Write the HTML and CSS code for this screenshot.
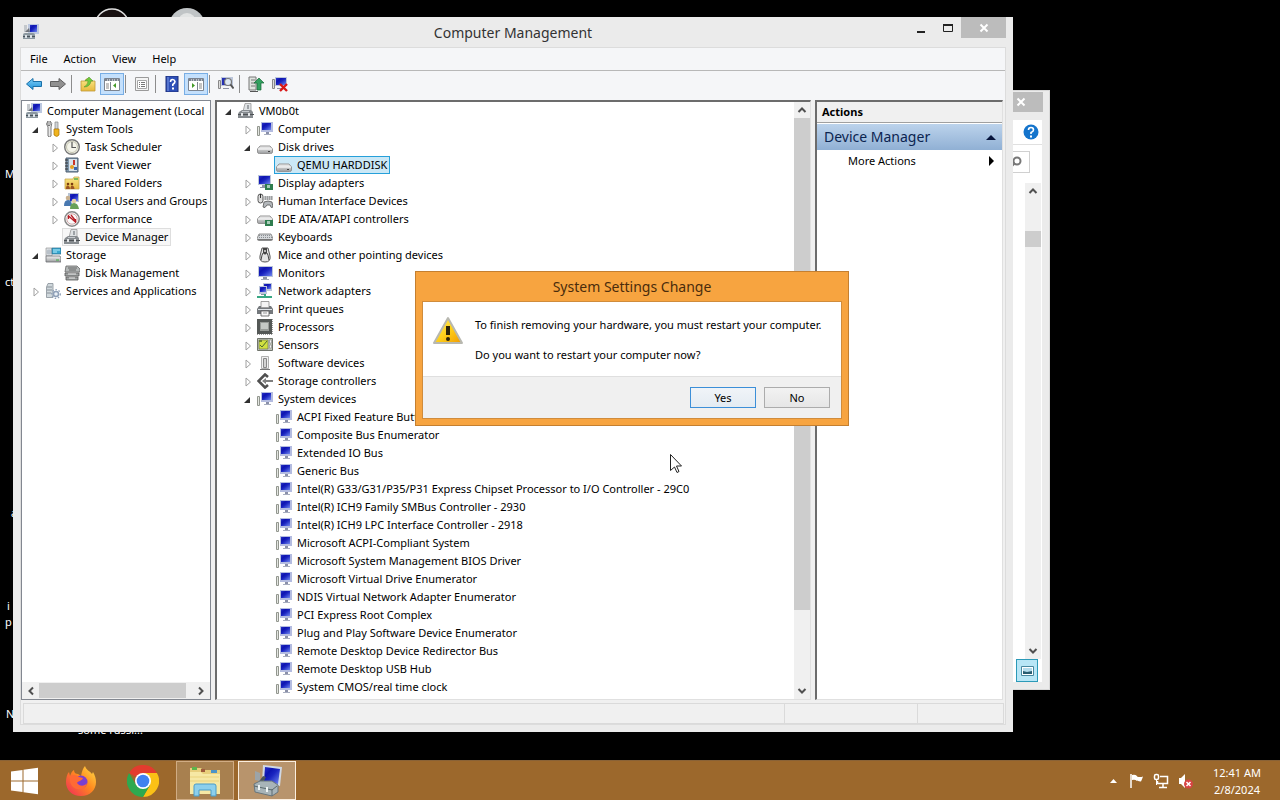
FILE: index.html
```
<!DOCTYPE html>
<html lang="en">
<head>
    <meta charset="UTF-8">
    <meta name="viewport" content="width=device-width, initial-scale=1.0">
    <title>Computer Management</title>
    <link rel="stylesheet" href="styles.css">
</head>
<body>
    <svg class="sprite" aria-hidden="true">
        <defs>
            <linearGradient id="screen" x1="0" y1="0" x2="1" y2="1">
                <stop offset="0" stop-color="#2a34c8"/><stop offset=".3" stop-color="#0e14b0"/><stop offset=".5" stop-color="#1a24c0"/><stop offset="1" stop-color="#7088f0"/>
            </linearGradient>
            <linearGradient id="metal" x1="0" y1="0" x2="0" y2="1">
                <stop offset="0" stop-color="#f4f4f4"/><stop offset="1" stop-color="#9a9c9e"/>
            </linearGradient>
            <linearGradient id="yellow" x1="0" y1="0" x2="0" y2="1">
                <stop offset="0" stop-color="#fbe98c"/><stop offset="1" stop-color="#e8b93c"/>
            </linearGradient>
            <linearGradient id="blue" x1="0" y1="0" x2="0" y2="1">
                <stop offset="0" stop-color="#7fd0f8"/><stop offset="1" stop-color="#1e90d8"/>
            </linearGradient>
            <linearGradient id="warn" x1="0" y1="0" x2="1" y2="1">
                <stop offset="0" stop-color="#fff27a"/><stop offset=".5" stop-color="#ffd21c"/><stop offset="1" stop-color="#f09a00"/>
            </linearGradient>
            <linearGradient id="fox" x1="1" y1="0" x2="0" y2="1">
                <stop offset="0" stop-color="#ffe14a"/><stop offset=".45" stop-color="#ff8a1e"/><stop offset="1" stop-color="#f0265c"/>
            </linearGradient>
        </defs>

        <symbol id="closed" viewBox="0 0 16 18"><path d="M5 6v8L9.500 10z" fill="#fff" stroke="#a0a0a0"/></symbol>
        <symbol id="open" viewBox="0 0 16 18"><path d="M9 7v6H3z" fill="#303030"/></symbol>

        <symbol id="mmc" viewBox="0 0 16 16">
            <path d="M5 0h11v10H5z" fill="#bcc8e0"/><path d="M7 1h7v7H7z" fill="url(#screen)"/><path d="M1 1h3v7H1z" fill="#c4c8cc"/>
            <path d="M2 8l4-4 1 4z" fill="#70747c"/>
            <path d="M0 11q0-2 2-2h8q2 0 2 2v4H0z" fill="#8c98a0"/><path d="M0 12h12v1H0z" fill="#48525a"/><path d="M2 11h2v3H2zM7 11h2v3H7z" fill="#dde3e8"/>
        </symbol>
        <symbol id="tools" viewBox="0 0 16 16">
            <path d="M3 0v4l1 1 1-1V0q3 2 1 6v9q-2 2-3 0V6Q0 3 3 0z" fill="#e8e8e8" stroke="#777"/>
            <path d="M10 1h3v7h-3z" fill="#d0d4d8" stroke="#888" stroke-width=".7"/><path d="M9 8h5v6q-2 3-5 0z" fill="#f0b41e" stroke="#a87408" stroke-width=".7"/>
        </symbol>
        <symbol id="clock" viewBox="0 0 16 16">
            <circle cx="8" cy="8" r="7.300" fill="#f4f4ea" stroke="#777" stroke-width="1.400"/><circle cx="8" cy="8" r="5.500" fill="none" stroke="#c4c4b0"/>
            <path d="M8 3v5.500h4" fill="none" stroke="#555" stroke-width="1.200"/>
        </symbol>
        <symbol id="event" viewBox="0 0 16 16">
            <path d="M2 1h12v14H2z" fill="#7f97ac" stroke="#4e5f70"/><path d="M5 2h8v12H5z" fill="#d8e2ea"/><path d="M1 3h3M1 6h3M1 9h3M1 12h3" stroke="#333"/>
            <path d="M9 3h2v5H9z" fill="#c83428"/><circle cx="8" cy="10" r="2" fill="#e8a020"/><path d="M10 10h3v3h-3z" fill="#3a68b0"/>
        </symbol>
        <symbol id="folder" viewBox="0 0 16 16">
            <path d="M1 4h8l1-2h5v12H1z" fill="url(#yellow)" stroke="#c8a850" stroke-width=".8"/><path d="M10 3h4v2h-4z" fill="#7cba58"/>
            <circle cx="4" cy="9" r="1.300" fill="#7a3c10"/><circle cx="8" cy="9" r="1.300" fill="#7a3c10"/><path d="M2 14q0-4 2-3.500T6 14zM6.500 14q0-4 2-3.500T10.500 14z" fill="#9a5424"/>
        </symbol>
        <symbol id="users" viewBox="0 0 16 16">
            <path d="M4 0h11v9H4z" fill="#b8c4d4"/><path d="M6 1h8v7H6z" fill="url(#screen)"/>
            <circle cx="4" cy="5" r="2.300" fill="#c8b090"/><path d="M0 13q0-6 4-6t4 6z" fill="#4878b0"/><circle cx="10" cy="8" r="2.300" fill="#e4cca4"/><path d="M6 16q0-6 4-6t5 6z" fill="#68a058"/>
        </symbol>
        <symbol id="perf" viewBox="0 0 16 16">
            <circle cx="8" cy="8" r="7.200" fill="#fafafa" stroke="#888" stroke-width="1.500"/><circle cx="8" cy="8" r="5.200" fill="none" stroke="#d0a8a8"/>
            <path d="M4.500 8V5l7 6V8M7 4l4 5" stroke="#b81c24" stroke-width="1.300" fill="none"/>
        </symbol>
        <symbol id="devmgr" viewBox="0 0 16 16">
            <path d="M7 .5h6v8H5z" fill="#dfe2e4" stroke="#999" stroke-width=".8"/><path d="M9 2h2v4H9z" fill="#9da2a6"/>
            <path d="M1 9l3-2h9l2 2v6H0v-4z" fill="#868b8f"/><path d="M0 11h16v1H0z" fill="#4e5256"/><path d="M3 10h2v3H3zM10 10h2v3h-2z" fill="#e4e6e8"/><path d="M4 8h7v1H4z" fill="#c4c8cc"/>
        </symbol>
        <symbol id="storage" viewBox="0 0 16 16">
            <path d="M1 1h6v8H1z" fill="#dce0e4" stroke="#999" stroke-width=".7"/><circle cx="4" cy="5" r="2.500" fill="#b8c0c8"/>
            <path d="M7 1h9v6H7z" fill="#38a8d0" stroke="#286888" stroke-width=".7"/><path d="M8 3h7M8 5h4" stroke="#b8ecfa"/>
            <path d="M1 9h14l1 2v4H1z" fill="url(#metal)" stroke="#6c7074" stroke-width=".8"/><path d="M11 13h3" stroke="#3cae3c"/>
        </symbol>
        <symbol id="diskmgmt" viewBox="0 0 16 16">
            <path d="M2 1h11l3 3v3H1z" fill="#b4b8b8" stroke="#666" stroke-width=".8"/><path d="M4 3h9M5 5h7" stroke="#666"/>
            <path d="M1 8h14v3H1zM2 12h12v3H2z" fill="#a0a4a4" stroke="#555" stroke-width=".8"/><path d="M4 9h8M5 13h6" stroke="#e8e8e8"/>
        </symbol>
        <symbol id="services" viewBox="0 0 16 16">
            <path d="M3 .5h5v14H1.500V4z" fill="#d0d8dc" stroke="#889098" stroke-width=".8"/><path d="M2 4h5M2 7h5M2 10h4" stroke="#889098"/>
            <circle cx="11" cy="11" r="2.500" fill="#eaf0f6" stroke="#8fa0b8" stroke-width="1.500"/><circle cx="11" cy="11" r="4.300" fill="none" stroke="#8fa0b8" stroke-width="1.300" stroke-dasharray="1.500 1.700"/>
        </symbol>
        <symbol id="computer" viewBox="0 0 16 16">
            <path d="M.5 5.500h2v9h-2z" fill="#e4e6e2" stroke="#92968e"/><path d="M4 1h12v10H4z" fill="#b4bce0"/><path d="M5 2h9v7H5z" fill="url(#screen)"/>
            <path d="M9 11h3v2H9z" fill="#8a90a8"/><path d="M7 13h7v1H7z" fill="#a8aec0"/>
        </symbol>
        <symbol id="disk" viewBox="0 0 16 16">
            <path d="M3 7h10l2.500 3v3q0 1.500-2 1.500h-11q-2 0-2-1.500v-3z" fill="url(#metal)" stroke="#959595"/><path d="M1 10h14" stroke="#fff"/><path d="M11 12.500h2" stroke="#444"/>
        </symbol>
        <symbol id="display" viewBox="0 0 16 16">
            <path d="M1 0h13v10H1z" fill="#bcc6da"/><path d="M2 1h11v8H2z" fill="url(#screen)"/><path d="M5 10h3v2H5zM3 12h6v1H3z" fill="#8d93a5"/>
            <path d="M8 9h8v6H8z" fill="#2f7d4f"/><path d="M10 10h3v3h-3z" fill="#a8ccb8"/>
        </symbol>
        <symbol id="hid" viewBox="0 0 16 16">
            <rect x="1" y="1" width="5" height="9" rx="2.500" fill="#ddd" stroke="#555"/><path d="M3.500 1v4" stroke="#333"/>
            <path d="M7 3h9v4H7z" fill="#c4c6c8"/><path d="M8 4h7M8 6h7" stroke="#777" stroke-dasharray="1 1"/>
            <path d="M7 9q4-2 8 0l1 5q-2 2-3-2h-3q-2 4-4 2z" fill="#b4b8bc" stroke="#555" stroke-width=".8"/>
        </symbol>
        <symbol id="ide" viewBox="0 0 16 16">
            <path d="M3 5h10l2.500 3v3q0 1.500-1 1.500H2q-1.500 0-1.500-1.500V8z" fill="url(#metal)" stroke="#959595"/><path d="M1 8h14" stroke="#fff"/><path d="M8 9h8v6H8z" fill="#2f7d4f"/><path d="M10 10h3v3h-3z" fill="#a8ccb8"/>
        </symbol>
        <symbol id="keyboard" viewBox="0 0 16 16">
            <path d="M2 5h12l2 4.500q0 2-2 2H2q-2 0-2-2z" fill="#d4d7da" stroke="#666" stroke-width=".7"/><path d="M2 6.500h12M2 8.500h13" stroke="#8a8e92" stroke-dasharray="1 1"/><path d="M1 10.500h14" stroke="#777"/>
        </symbol>
        <symbol id="mouse" viewBox="0 0 16 16">
            <path d="M5 1h6l2 8q1 6-5 6t-5-6z" fill="#e4e4e4" stroke="#555"/><path d="M6 1h4v5q-2 3-4 0z" fill="#444"/><circle cx="8" cy="4" r="1" fill="#ddd"/><path d="M4 13q1-6 2-7M12 13q-1-6-2-7" stroke="#444" fill="none"/>
        </symbol>
        <symbol id="monitor" viewBox="0 0 16 16">
            <path d="M1 1h15v11H1z" fill="#bcc6da"/><path d="M2 2h13v9H2z" fill="url(#screen)"/><path d="M6 12h4v2H6z" fill="#8d93a5"/><path d="M4 14h8v1H4z" fill="#a4aab8"/>
        </symbol>
        <symbol id="network" viewBox="0 0 16 16">
            <path d="M6 0h9v8H6z" fill="#bcc6da"/><path d="M7 1h7v5H7z" fill="url(#screen)"/><path d="M2 3h8v8H2z" fill="#bcc6da"/><path d="M3 4h6v5H3z" fill="url(#screen)"/>
            <path d="M4 11h4v1H4z" fill="#8d93a5"/><path d="M0 13h15v2H0zM7 11h2v3H7z" fill="#38a884"/>
        </symbol>
        <symbol id="printer" viewBox="0 0 16 16">
            <path d="M4 .5h8v6H4z" fill="#f4f4f4" stroke="#888" stroke-width=".8"/><path d="M2 5h2v2h8V5h2l2 3v5H0V8z" fill="#74787c"/><path d="M1 8.500h14" stroke="#e0e4e8"/><path d="M4 10h8v5H4z" fill="#f8f8f8" stroke="#555" stroke-width=".8"/><path d="M6 12h4" stroke="#999"/>
        </symbol>
        <symbol id="cpu" viewBox="0 0 16 16">
            <path d="M0 0h15v15H0z" fill="#545856"/><path d="M15.500 0v15M0 15.500h15" stroke="#999" stroke-dasharray="1 1"/><path d="M3 3h9v9H3z" fill="#989c98"/><path d="M4 4h7v6H4z" fill="#c4c8c4"/>
        </symbol>
        <symbol id="sensor" viewBox="0 0 16 16">
            <path d="M.5 1.500h15v12H.5z" fill="#c0c4b8" stroke="#70746c"/><path d="M2 3h9v9H2z" fill="#d0e040" stroke="#606850" stroke-width=".6"/><path d="M3 8l2 2 5-6" stroke="#4d6a34" fill="none"/><path d="M12.500 3h2v3h-2zM12.500 8h2v3h-2z" fill="#f4f4f4" stroke="#777" stroke-width=".5"/><path d="M2 3h3v2H2z" fill="#708030"/>
        </symbol>
        <symbol id="software" viewBox="0 0 16 16">
            <path d="M4.500 1.500h7v12h-7z" fill="#f0f0f0" stroke="#b0b0b0"/><path d="M6.500 3.500h3v9h-3z" fill="#d4d4d4" stroke="#888"/><path d="M3 14.500h10" stroke="#777"/>
        </symbol>
        <symbol id="storagectl" viewBox="0 0 16 16">
            <path d="M11 4L8 1.500 1.500 8 8 14.500 11 12" fill="none" stroke="#505050" stroke-width="2.600"/><path d="M5 8l4-3v2h7v2H9v2z" fill="#808080"/>
        </symbol>

        <symbol id="back" viewBox="0 0 16 16"><path d="M.5 8L7 2.500v3h8.500v5H7v3z" fill="url(#blue)" stroke="#1a70a8"/></symbol>
        <symbol id="forward" viewBox="0 0 16 16"><path d="M15.500 8L9 2.500v3H.5v5H9v3z" fill="#909090" stroke="#606060"/></symbol>
        <symbol id="upfolder" viewBox="0 0 16 16"><path d="M1 5h4l1-2h3v2h6v10H1z" fill="url(#yellow)" stroke="#c09a38" stroke-width=".8"/><path d="M4 11q4-2 4-6H5l4-4 4 4h-2q-1 6-7 6z" fill="#6fc83c" stroke="#4f8f28" stroke-width=".5"/></symbol>
        <symbol id="tree-pane" viewBox="0 0 16 16"><path d="M.5 2.500h15v12H.5z" fill="#fff" stroke="#7c8490"/><path d="M1 4h14" stroke="#7c8490" stroke-width="2" stroke-dasharray="2 .5"/><path d="M6.500 6v8" stroke="#7c8490"/><path d="M2 8h3M2 10h3M2 12h3" stroke="#888"/><path d="M12 7v5L9 9.500z" fill="#449a28"/></symbol>
        <symbol id="props" viewBox="0 0 16 16"><path d="M1.500 1.500h13v13h-13z" fill="#f4f4f4" stroke="#9a9a9a"/><path d="M3.500 4.500h9v8h-9z" fill="#fff" stroke="#a8a8a8"/><path d="M5 6.500h1M7 6.500h4M5 8.500h1M7 8.500h4M5 10.500h1M7 10.500h4" stroke="#777"/></symbol>
        <symbol id="help" viewBox="0 0 16 16"><path d="M2 0h12v16H2z" fill="#2e50b8" stroke="#1d2f78"/><path d="M4 1v14" stroke="#7c98e4"/><path d="M6.500 6q0-2.500 2-2.500T11 5.500Q11 7 8.800 8.500V10" fill="none" stroke="#fff" stroke-width="1.600"/><path d="M8 11.500h2v2H8z" fill="#fff"/></symbol>
        <symbol id="action-pane" viewBox="0 0 16 16"><path d="M.5 2.500h15v12H.5z" fill="#fff" stroke="#7c8490"/><path d="M1 4h14" stroke="#7c8490" stroke-width="2" stroke-dasharray="2 .5"/><path d="M9.500 6v8" stroke="#7c8490"/><path d="M11 8h3M11 10h3M11 12h3" stroke="#888"/><path d="M4 7v5l3-2.500z" fill="#449a28"/></symbol>
        <symbol id="scan" viewBox="0 0 16 16"><path d="M.5 4.500h2v8h-2z" fill="#ddd" stroke="#888"/><path d="M3 1h12v9H3z" fill="#bcc6da"/><path d="M4 2h4v7H4z" fill="#2430b4"/><path d="M5 12h6v1H5z" fill="#8d93a5"/><circle cx="10" cy="6" r="3.500" fill="#dce8f4" stroke="#777" stroke-width="1.200"/><path d="M12.500 8.500l3 4" stroke="#555" stroke-width="2"/></symbol>
        <symbol id="update" viewBox="0 0 16 16"><path d="M1 1h7v13H1z" fill="#dfe4e0" stroke="#777"/><path d="M3 4h4M3 7h4M3 10h4" stroke="#777"/><path d="M2 15.500h8" stroke="#555"/><path d="M9 14V7H6l5-5 5 5h-3v7z" fill="#32a060" stroke="#186838" stroke-width=".7"/></symbol>
        <symbol id="uninstall" viewBox="0 0 16 16"><path d="M.5 3.500h2v9h-2z" fill="#ddd" stroke="#888"/><path d="M3 1h12v9H3z" fill="#bcc6da"/><path d="M4 2h10v7H4z" fill="url(#screen)"/><path d="M5 12h5v1H5z" fill="#8d93a5"/><path d="M8 8l7 7M15 8l-7 7" stroke="#d81818" stroke-width="2.400"/></symbol>
        <symbol id="chev-up" viewBox="0 0 16 16"><path d="M4.500 10L8 6.500l3.500 3.500" fill="none" stroke="#505050" stroke-width="2"/></symbol>
        <symbol id="chev-down" viewBox="0 0 16 16"><path d="M4.500 6L8 9.500 11.500 6" fill="none" stroke="#505050" stroke-width="2"/></symbol>
        <symbol id="chev-left" viewBox="0 0 16 16"><path d="M10 4.500L6.500 8l3.500 3.500" fill="none" stroke="#505050" stroke-width="2"/></symbol>
        <symbol id="chev-right" viewBox="0 0 16 16"><path d="M6 4.500L9.500 8 6 11.500" fill="none" stroke="#505050" stroke-width="2"/></symbol>
        <symbol id="cross" viewBox="0 0 16 16"><path d="M4.500 4.500l7 7M11.500 4.500l-7 7" stroke="#fff" stroke-width="2"/></symbol>
    </svg>

    <main class="desktop">
        <svg class="shortcut-art ring" viewBox="0 0 36 36"><circle cx="18" cy="18" r="17" fill="#181010" stroke="#e0e0e0" stroke-width="1.500"/></svg>
        <svg class="shortcut-art ball" viewBox="0 0 36 36"><circle cx="18" cy="18" r="18" fill="#c0c4c6"/><circle cx="18" cy="14" r="9" fill="#e2e4e4"/></svg>
        <span class="shortcut s1">M</span>
        <span class="shortcut s2">ct</span>
        <span class="shortcut s3">a</span>
        <span class="shortcut s4">i<br>p</span>
        <span class="shortcut s5">N</span>
        <span class="shortcut s6">some russi...</span>

        <section class="window explorer">
            <button class="close" aria-label="Close"><svg class="icon"><use href="#cross"/></svg></button>
            <div class="explorer-body">
                <div class="explorer-help">
                    <svg class="icon" viewBox="0 0 16 16"><circle cx="8" cy="8" r="7.500" fill="#1474cc"/><path d="M5.500 6q0-2.500 2.500-2.500T10.500 6Q10.500 7.500 8 8.500V10" fill="none" stroke="#fff" stroke-width="1.600"/><path d="M7 11.500h2v2H7z" fill="#fff"/></svg>
                </div>
                <div class="explorer-search">
                    <svg class="icon" viewBox="0 0 16 16"><circle cx="8" cy="7" r="3.500" fill="none" stroke="#777" stroke-width="2"/><path d="M6 9l-4 4" stroke="#777" stroke-width="2"/></svg>
                </div>
                <div class="scroll-v">
                    <svg class="icon"><use href="#chev-up"/></svg>
                    <div class="explorer-track"><div class="explorer-thumb"></div></div>
                    <svg class="icon"><use href="#chev-down"/></svg>
                </div>
                <button class="view-button" aria-label="Large icons"><svg class="icon" viewBox="0 0 16 16"><path d="M2.500 3.500h12v9h-12z" fill="#fff" stroke="#4888a0"/><path d="M4 5h9v6H4z" fill="#b4dcec"/><path d="M4 8l4 1 5-1v3H4z" fill="#285c70"/></svg></button>
            </div>
        </section>

        <section class="window manager">
            <header class="titlebar">
                <svg class="icon"><use href="#mmc"/></svg>
                <h1>Computer Management</h1>
                <div class="caption-buttons">
                    <button aria-label="Minimize"><svg class="icon" viewBox="0 0 16 16"><path d="M4 12h8" stroke="#222" stroke-width="2"/></svg></button>
                    <button aria-label="Maximize"><svg class="icon" viewBox="0 0 16 16"><path d="M3.500 4.500h9v7h-9z" fill="none" stroke="#222"/><path d="M3 5h10" stroke="#222" stroke-width="2"/></svg></button>
                    <button class="close" aria-label="Close"><svg class="icon"><use href="#cross"/></svg></button>
                </div>
            </header>

            <div class="frame">
                <nav class="menubar">
                    <button>File</button>
                    <button>Action</button>
                    <button>View</button>
                    <button>Help</button>
                </nav>
                <div class="toolbar">
                    <button aria-label="Back"><svg class="icon"><use href="#back"/></svg></button>
                    <button aria-label="Forward"><svg class="icon"><use href="#forward"/></svg></button>
                    <span class="sep"></span>
                    <button aria-label="Up one level"><svg class="icon"><use href="#upfolder"/></svg></button>
                    <button class="on" aria-label="Show console tree"><svg class="icon"><use href="#tree-pane"/></svg></button>
                    <span class="sep"></span>
                    <button aria-label="Properties"><svg class="icon"><use href="#props"/></svg></button>
                    <span class="sep"></span>
                    <button aria-label="Help"><svg class="icon"><use href="#help"/></svg></button>
                    <button class="on" aria-label="Show action pane"><svg class="icon"><use href="#action-pane"/></svg></button>
                    <span class="sep"></span>
                    <button aria-label="Scan for hardware changes"><svg class="icon"><use href="#scan"/></svg></button>
                    <span class="sep"></span>
                    <button aria-label="Update driver"><svg class="icon"><use href="#update"/></svg></button>
                    <button aria-label="Uninstall"><svg class="icon"><use href="#uninstall"/></svg></button>
                </div>

                <div class="panes">
                    <div class="pane console">
                        <ul class="tree console-tree">
                            <li><span class="node root"><svg class="icon"><use href="#mmc"/></svg>Computer Management (Local</span>
                                <ul>
                                    <li><span class="node"><svg class="toggle"><use href="#open"/></svg><svg class="icon"><use href="#tools"/></svg>System Tools</span>
                                        <ul>
                                            <li><span class="node"><svg class="toggle"><use href="#closed"/></svg><svg class="icon"><use href="#clock"/></svg>Task Scheduler</span></li>
                                            <li><span class="node"><svg class="toggle"><use href="#closed"/></svg><svg class="icon"><use href="#event"/></svg>Event Viewer</span></li>
                                            <li><span class="node"><svg class="toggle"><use href="#closed"/></svg><svg class="icon"><use href="#folder"/></svg>Shared Folders</span></li>
                                            <li><span class="node"><svg class="toggle"><use href="#closed"/></svg><svg class="icon"><use href="#users"/></svg>Local Users and Groups</span></li>
                                            <li><span class="node"><svg class="toggle"><use href="#closed"/></svg><svg class="icon"><use href="#perf"/></svg>Performance</span></li>
                                            <li><span class="node leaf current"><svg class="icon"><use href="#devmgr"/></svg>Device Manager</span></li>
                                        </ul>
                                    </li>
                                    <li><span class="node"><svg class="toggle"><use href="#open"/></svg><svg class="icon"><use href="#storage"/></svg>Storage</span>
                                        <ul>
                                            <li><span class="node leaf"><svg class="icon"><use href="#diskmgmt"/></svg>Disk Management</span></li>
                                        </ul>
                                    </li>
                                    <li><span class="node"><svg class="toggle"><use href="#closed"/></svg><svg class="icon"><use href="#services"/></svg>Services and Applications</span></li>
                                </ul>
                            </li>
                        </ul>
                        <div class="scroll-h">
                            <svg class="icon"><use href="#chev-left"/></svg>
                            <div class="thumb"></div>
                            <svg class="icon"><use href="#chev-right"/></svg>
                        </div>
                    </div>

                    <div class="pane devices">
                        <ul class="tree device-tree">
                            <li><span class="node"><svg class="toggle"><use href="#open"/></svg><svg class="icon"><use href="#devmgr"/></svg>VM0b0t</span>
                                <ul>
                                    <li><span class="node"><svg class="toggle"><use href="#closed"/></svg><svg class="icon"><use href="#computer"/></svg>Computer</span></li>
                                    <li><span class="node"><svg class="toggle"><use href="#open"/></svg><svg class="icon"><use href="#disk"/></svg>Disk drives</span>
                                        <ul>
                                            <li><span class="node leaf selected"><svg class="icon"><use href="#disk"/></svg>QEMU HARDDISK</span></li>
                                        </ul>
                                    </li>
                                    <li><span class="node"><svg class="toggle"><use href="#closed"/></svg><svg class="icon"><use href="#display"/></svg>Display adapters</span></li>
                                    <li><span class="node"><svg class="toggle"><use href="#closed"/></svg><svg class="icon"><use href="#hid"/></svg>Human Interface Devices</span></li>
                                    <li><span class="node"><svg class="toggle"><use href="#closed"/></svg><svg class="icon"><use href="#ide"/></svg>IDE ATA/ATAPI controllers</span></li>
                                    <li><span class="node"><svg class="toggle"><use href="#closed"/></svg><svg class="icon"><use href="#keyboard"/></svg>Keyboards</span></li>
                                    <li><span class="node"><svg class="toggle"><use href="#closed"/></svg><svg class="icon"><use href="#mouse"/></svg>Mice and other pointing devices</span></li>
                                    <li><span class="node"><svg class="toggle"><use href="#closed"/></svg><svg class="icon"><use href="#monitor"/></svg>Monitors</span></li>
                                    <li><span class="node"><svg class="toggle"><use href="#closed"/></svg><svg class="icon"><use href="#network"/></svg>Network adapters</span></li>
                                    <li><span class="node"><svg class="toggle"><use href="#closed"/></svg><svg class="icon"><use href="#printer"/></svg>Print queues</span></li>
                                    <li><span class="node"><svg class="toggle"><use href="#closed"/></svg><svg class="icon"><use href="#cpu"/></svg>Processors</span></li>
                                    <li><span class="node"><svg class="toggle"><use href="#closed"/></svg><svg class="icon"><use href="#sensor"/></svg>Sensors</span></li>
                                    <li><span class="node"><svg class="toggle"><use href="#closed"/></svg><svg class="icon"><use href="#software"/></svg>Software devices</span></li>
                                    <li><span class="node"><svg class="toggle"><use href="#closed"/></svg><svg class="icon"><use href="#storagectl"/></svg>Storage controllers</span></li>
                                    <li><span class="node"><svg class="toggle"><use href="#open"/></svg><svg class="icon"><use href="#computer"/></svg>System devices</span>
                                        <ul>
                                            <li><span class="node leaf"><svg class="icon"><use href="#computer"/></svg>ACPI Fixed Feature Button</span></li>
                                            <li><span class="node leaf"><svg class="icon"><use href="#computer"/></svg>Composite Bus Enumerator</span></li>
                                            <li><span class="node leaf"><svg class="icon"><use href="#computer"/></svg>Extended IO Bus</span></li>
                                            <li><span class="node leaf"><svg class="icon"><use href="#computer"/></svg>Generic Bus</span></li>
                                            <li><span class="node leaf"><svg class="icon"><use href="#computer"/></svg>Intel(R) G33/G31/P35/P31 Express Chipset Processor to I/O Controller - 29C0</span></li>
                                            <li><span class="node leaf"><svg class="icon"><use href="#computer"/></svg>Intel(R) ICH9 Family SMBus Controller - 2930</span></li>
                                            <li><span class="node leaf"><svg class="icon"><use href="#computer"/></svg>Intel(R) ICH9 LPC Interface Controller - 2918</span></li>
                                            <li><span class="node leaf"><svg class="icon"><use href="#computer"/></svg>Microsoft ACPI-Compliant System</span></li>
                                            <li><span class="node leaf"><svg class="icon"><use href="#computer"/></svg>Microsoft System Management BIOS Driver</span></li>
                                            <li><span class="node leaf"><svg class="icon"><use href="#computer"/></svg>Microsoft Virtual Drive Enumerator</span></li>
                                            <li><span class="node leaf"><svg class="icon"><use href="#computer"/></svg>NDIS Virtual Network Adapter Enumerator</span></li>
                                            <li><span class="node leaf"><svg class="icon"><use href="#computer"/></svg>PCI Express Root Complex</span></li>
                                            <li><span class="node leaf"><svg class="icon"><use href="#computer"/></svg>Plug and Play Software Device Enumerator</span></li>
                                            <li><span class="node leaf"><svg class="icon"><use href="#computer"/></svg>Remote Desktop Device Redirector Bus</span></li>
                                            <li><span class="node leaf"><svg class="icon"><use href="#computer"/></svg>Remote Desktop USB Hub</span></li>
                                            <li><span class="node leaf"><svg class="icon"><use href="#computer"/></svg>System CMOS/real time clock</span></li>
                                        </ul>
                                    </li>
                                </ul>
                            </li>
                        </ul>
                        <div class="scroll-v">
                            <svg class="icon"><use href="#chev-up"/></svg>
                            <div class="track"><div class="thumb"></div></div>
                            <svg class="icon"><use href="#chev-down"/></svg>
                        </div>
                    </div>

                    <aside class="pane actions">
                        <h2>Actions</h2>
                        <button class="group">Device Manager<svg class="icon" viewBox="0 0 16 16"><path d="M3 11h10L8 6z" fill="#06143c"/></svg></button>
                        <button class="item">More Actions<svg class="icon" viewBox="0 0 16 16"><path d="M6 3v10l5-5z" fill="#000"/></svg></button>
                    </aside>
                </div>

                <footer class="statusbar"><span></span><span></span><span></span></footer>
            </div>
        </section>

        <section class="dialog" role="dialog" aria-labelledby="dialog-title">
            <h2 id="dialog-title">System Settings Change</h2>
            <div class="dialog-body">
                <div class="message">
                    <svg class="warning" viewBox="0 0 32 32"><path d="M16 3L30 28H2z" fill="url(#warn)" stroke="#b8b8b0" stroke-width="2" stroke-linejoin="round"/><path d="M14 11h4v9h-4z" fill="#2c2408"/><circle cx="16" cy="24" r="2" fill="#2c2408"/></svg>
                    <div>
                        <p>To finish removing your hardware, you must restart your computer.</p>
                        <p>Do you want to restart your computer now?</p>
                    </div>
                </div>
                <div class="choices">
                    <button class="default">Yes</button>
                    <button>No</button>
                </div>
            </div>
        </section>

        <svg class="cursor" viewBox="0 0 12 20"><path d="M.5.5v16l4-3.500 2.500 5.500 2-1L6.500 12H11.500z" fill="#fff" stroke="#222"/></svg>
    </main>

    <footer class="taskbar">
        <button class="task start" aria-label="Start">
            <svg viewBox="0 0 28 28"><path d="M0 4.500l11.500-1.600v10.600H0zM12.500 2.700L27 .7v12.800H12.500zM0 14.500h11.500v10.600L0 23.500zM12.500 14.500H27v12.800l-14.500-2z" fill="#fff"/></svg>
        </button>
        <button class="task" aria-label="Firefox">
            <svg viewBox="0 0 32 32"><path d="M16 31C7 31 1 25 1 17c0-4 1-8 3-10l1 4c1-3 2-5 4-6 0 3 2 4 4 4l3 2c1-5 2-8 4-10 1 4 5 5 7 8l1-2c2 3 3 7 3 10 0 8-6 14-15 14z" fill="url(#fox)"/><circle cx="16" cy="17" r="6.500" fill="#7a3fd0"/><path d="M5 11c4-2 7-1 9 1l4 1c-1 3-5 3-6 5 2 3 7 4 10 0-1 6-6 7-10 6-5-1-8-6-7-13z" fill="#ff6a34"/></svg>
        </button>
        <button class="task" aria-label="Chrome">
            <svg viewBox="0 0 32 32"><path d="M16 16L2.100 8A16 16 0 0 1 29.900 8H16z" fill="#e33b2e"/><path d="M16 16V8h13.900A16 16 0 0 1 16 32l7-12z" fill="#fbc116"/><path d="M16 16l7 4-7 12A16 16 0 0 1 2.100 8l7 12z" fill="#2da94f"/><circle cx="16" cy="16" r="8" fill="#fff"/><circle cx="16" cy="16" r="6.300" fill="#3f82f0"/></svg>
        </button>
        <button class="task running" aria-label="File Explorer">
            <svg viewBox="0 0 32 32"><path d="M1 3h11l2 2h17v21H1z" fill="#e8cf7c"/><path d="M3 2h5v3H3z" fill="#5cb44c"/><path d="M12 4h4v3h-4z" fill="#a05c3c"/><path d="M22 5h6v3h-6z" fill="#4c94c8"/><path d="M1 7h11l2 2h17v20H1z" fill="#f6e8a4"/><path d="M1 12h29M1 16h29" stroke="#ead27c"/><path d="M5 31V21q0-2 2-2h18q2 0 2 2v10h-5v-6H10v6z" fill="#8ccfec" stroke="#4a9cc8"/></svg>
        </button>
        <button class="task running active" aria-label="Computer Management">
            <svg viewBox="0 0 32 32"><path d="M12 0l19 2-2 19-18-3z" fill="#d0d8e4"/><path d="M14 2l15 2-2 15-14-3z" fill="url(#screen)"/><path d="M4 6l5 2v8l-5-1z" fill="#9ca4a8"/><path d="M7 18l5-7 3 1-4 7z" fill="#4c5458"/><path d="M3 19l6-3h12l6 4v7l-6 4-17-4z" fill="#a8b4b8" stroke="#68767c"/><path d="M3 21l18 4 5-4M21 24v7" stroke="#5c6a70" fill="none"/><path d="M7 20h2v5H7zM15 22h2v5h-2z" fill="#eef4f4"/></svg>
        </button>
        <div class="tray">
            <svg class="icon" viewBox="0 0 16 16"><path d="M5 10h7L8.500 6z" fill="#fff"/></svg>
            <svg class="icon" viewBox="0 0 16 16"><path d="M2 1v14" stroke="#fff" stroke-width="1.500"/><path d="M3 2q3-1 5 1v5q-2-2-5-1zM8 3.500q3 1 6 0-1 3-2 5-2 0-4-1z" fill="#fff"/></svg>
            <svg class="icon" viewBox="0 0 16 16"><path d="M7 3.500h7.500v7H4.500V8M10 11v3M6 14.500h8" fill="none" stroke="#fff" stroke-width="1.500"/><rect x="1.500" y="1.500" width="4" height="5" rx="1.500" fill="none" stroke="#fff" stroke-width="1.500"/><path d="M3.500 7v5" stroke="#fff"/></svg>
            <svg class="icon" viewBox="0 0 16 16"><path d="M2 5h2l4-4v14l-4-4H2z" fill="#fff"/><circle cx="11.500" cy="11" r="4.500" fill="#d84444"/><path d="M9.500 9l4 4M13.500 9l-4 4" stroke="#fff" stroke-width="1.500"/></svg>
            <time class="clock">12:41 AM<br>2/8/2024</time>
        </div>
    </footer>
</body>
</html>
```
FILE: styles.css
```
* {
    box-sizing: border-box;
    margin: 0;
    padding: 0;
}

body {
    height: 100vh;
    display: flex;
    flex-direction: column;
    overflow: hidden;
    background: #000;
    color: #000;
    font-family: "Noto Sans", "Open Sans", sans-serif;
    font-size: 11px;
    line-height: 18px;
}

button {
    border: none;
    background: none;
    color: inherit;
    font: inherit;
}

ul {
    list-style: none;
}

.sprite {
    position: absolute;
    width: 0;
    height: 0;
}

.icon {
    flex: none;
    display: block;
    width: 16px;
    height: 16px;
}

/* Desktop */

.desktop {
    position: relative;
    flex: 1;
    overflow: hidden;
}

.shortcut,
.shortcut-art {
    position: absolute;
    color: #fff;
    line-height: 16px;
    white-space: nowrap;
}

.shortcut-art {
    top: 8px;
    width: 36px;
    height: 36px;
}

.ring { left: 94px; }
.ball { left: 169px; }
.s1 { left: 5px; top: 166px; }
.s2 { left: 5px; top: 274px; }
.s3 { left: 11px; top: 505px; }
.s4 { left: 5px; top: 598px; text-align: center; }
.s5 { left: 6px; top: 706px; }
.s6 { left: 78px; top: 722px; }

.window {
    position: absolute;
    display: flex;
    flex-direction: column;
    background: #ebebeb;
}

.close {
    display: flex;
    align-items: center;
    justify-content: center;
    width: 44px;
    height: 20px;
    background: #bcbcbc;
}

/* Explorer window in the back */

.explorer {
    top: 90px;
    right: 230px;
    bottom: 70px;
    width: 50%;
    padding: 1px 6px 7px;
    border: 1px solid #d8d8d8;
}

.explorer .close {
    align-self: flex-end;
    margin-bottom: 8px;
}

.explorer-body {
    flex: 1;
    display: flex;
    flex-direction: column;
    align-items: flex-end;
    margin-right: 1px;
    background: #fff;
}

.explorer-help {
    align-self: stretch;
    display: flex;
    justify-content: flex-end;
    padding: 4px 3px;
    border-bottom: 1px solid #e0e0e0;
}

.explorer-search {
    display: flex;
    justify-content: flex-end;
    align-items: center;
    width: 200px;
    height: 22px;
    margin: 6px 12px 10px;
    padding-right: 4px;
    border: 1px solid #d0d0d0;
}

.explorer .scroll-v {
    flex: 1;
    margin-right: 1px;
}

.explorer-track {
    flex: 1;
    padding-top: 32px;
}

.explorer-thumb {
    height: 16px;
    background: #cdcdcd;
}

.view-button {
    display: flex;
    align-items: center;
    justify-content: center;
    width: 22px;
    height: 23px;
    margin-right: 4px;
    border: 1px solid #2c9ab8;
    background: #b8e6f6;
}

/* Computer Management window */

.manager {
    top: 17px;
    right: 267px;
    bottom: 28px;
    left: 13px;
    padding: 0 7px 7px;
}

.titlebar {
    display: flex;
    align-items: flex-start;
    height: 30px;
}

.titlebar > .icon {
    align-self: center;
    margin: 0 110px 0 3px;
}

.titlebar h1 {
    flex: 1;
    padding-top: 4px;
    color: #333;
    font-size: 14px;
    font-weight: 400;
    line-height: 24px;
    text-align: center;
}

.caption-buttons {
    display: flex;
    width: 129px;
    justify-content: flex-end;
}

.caption-buttons button {
    display: flex;
    align-items: center;
    justify-content: center;
    width: 27px;
    height: 21px;
}

.caption-buttons .close {
    width: 45px;
}

.frame {
    flex: 1;
    display: flex;
    flex-direction: column;
    min-height: 0;
    border: 1px solid #dcdcdc;
    background: #f0f0f0;
}

.menubar {
    display: flex;
    height: 23px;
    padding-left: 1px;
    border-bottom: 1px solid #b8b8b8;
    background: #f5f6f8;
}

.menubar button {
    padding: 0 8px;
}

.toolbar {
    display: flex;
    align-items: center;
    height: 29px;
    padding: 0 0 4px 1px;
    background: #f5f6f8;
}

.toolbar button {
    display: flex;
    align-items: center;
    justify-content: center;
    width: 24px;
    height: 22px;
}

.toolbar .on {
    border: 1px solid #78aee5;
    background: #c4e0fc;
}

.sep {
    width: 1px;
    height: 18px;
    margin: 0 4px 0 1px;
    background: #8c8c8c;
}

.panes {
    flex: 1;
    display: grid;
    grid-template-columns: 190px 1fr 188px;
    gap: 4px;
    min-height: 0;
    padding-right: 2px;
}

.pane {
    display: flex;
    min-width: 0;
    min-height: 0;
    overflow: hidden;
    border: 1px solid #828790;
    background: #fff;
}

.console {
    flex-direction: column;
}

.devices,
.actions {
    border-width: 2px 1px 1px 2px;
    border-color: #6c6c6c #e0e0e0 #e0e0e0 #6c6c6c;
}

/* Trees */

.tree {
    flex: 1;
    min-width: 0;
    min-height: 0;
    overflow: hidden;
    white-space: nowrap;
}

.console-tree {
    padding-top: 1px;
}

.console-tree > li > ul {
    padding-left: 7px;
}

.device-tree {
    padding-left: 5px;
}

.tree ul ul,
.device-tree ul {
    padding-left: 19px;
}

.node {
    display: flex;
    align-items: center;
    width: max-content;
    height: 18px;
    padding-right: 3px;
}

.node .icon {
    margin-right: 5px;
}

.toggle {
    flex: none;
    width: 16px;
    height: 18px;
}

.root {
    padding: 0 0 0 4px;
}

.leaf {
    margin-left: 14px;
    padding-left: 2px;
}

.current {
    background: #f7f7f7;
    box-shadow: inset 0 0 0 1px #dedede;
}

.selected {
    background: #cbe8f6;
    box-shadow: inset 0 0 0 1px #26a0da;
}

/* Scroll bars */

.scroll-v {
    display: flex;
    flex-direction: column;
    width: 16px;
    background: #f0f0f0;
}

.track {
    flex: 1;
}

.track .thumb {
    height: 87%;
    background: #cdcdcd;
}

.scroll-h {
    display: flex;
    align-items: center;
    height: 17px;
    padding: 0 1px;
    background: #f0f0f0;
}

.scroll-h .thumb {
    flex: 1;
    height: 15px;
    margin-right: 7px;
    background: #cdcdcd;
}

/* Actions pane */

.actions {
    flex-direction: column;
}

.actions h2 {
    height: 21px;
    padding-left: 5px;
    border-bottom: 1px solid #a0a0a0;
    background: #f0f0f0;
    font-size: 11px;
    line-height: 20px;
}

.actions button {
    display: flex;
    align-items: center;
    justify-content: space-between;
    padding-right: 3px;
    text-align: left;
}

.actions .group {
    height: 26px;
    margin-top: 1px;
    padding-left: 7px;
    background: linear-gradient(#bcd3ec, #90b0d4);
    color: #0b2450;
    font-size: 14px;
}

.actions .item {
    height: 22px;
    padding-left: 31px;
}

.statusbar {
    display: flex;
    height: 24px;
    padding: 3px 1px 0 2px;
}

.statusbar span {
    border: 1px solid #dadada;
    border-left: none;
}

.statusbar span:nth-child(1) {
    flex: 1;
    border-left: 1px solid #dadada;
}

.statusbar span:nth-child(2) { width: 133px; }
.statusbar span:nth-child(3) { width: 86px; }

/* Restart dialog */

.dialog {
    position: absolute;
    top: 271px;
    left: 415px;
    width: 434px;
    padding: 0 6px 6px;
    border: 1px solid #c47f30;
    background: #f7a440;
}

.dialog h2 {
    color: #4a2c0c;
    font-size: 14px;
    font-weight: 400;
    line-height: 29px;
    text-align: center;
}

.dialog-body {
    border: 1px solid #d08c3c;
    background: #fff;
}

.message {
    display: flex;
    gap: 11px;
    padding: 13px 9px 11px;
    white-space: nowrap;
}

.message p {
    line-height: 20px;
}

.message p + p {
    margin-top: 10px;
}

.warning {
    flex: none;
    width: 32px;
    height: 32px;
}

.choices {
    display: flex;
    justify-content: flex-end;
    gap: 8px;
    padding: 10px 11px;
    border-top: 1px solid #dfdfdf;
    background: #f0f0f0;
}

.choices button {
    width: 66px;
    height: 21px;
    border: 1px solid #acacac;
    background: linear-gradient(#f2f2f2, #e6e6e6);
}

.choices .default {
    border-color: #3c8fd8;
    background: linear-gradient(#f0f4f8, #e4ebf2);
}

.cursor {
    position: absolute;
    top: 454px;
    left: 670px;
    width: 12px;
    height: 20px;
}

/* Taskbar */

.taskbar {
    display: flex;
    height: 40px;
    border-top: 1px solid #8a6236;
    background: #9c682c;
}

.task {
    display: flex;
    align-items: center;
    justify-content: center;
    width: 58px;
    margin-right: 4px;
}

.task svg {
    width: 32px;
    height: 32px;
}

.start {
    width: 50px;
    margin-right: 2px;
}

.start svg {
    width: 28px;
    height: 28px;
}

.running {
    border: 1px solid #d0ac84;
    background: #a8804f;
}

.active {
    border-color: #fbeede;
    background: #b8946c;
}

.tray {
    flex: 1;
    display: flex;
    align-items: center;
    justify-content: flex-end;
    gap: 8px;
    padding-right: 19px;
    color: #fff;
}

.clock {
    margin-left: 12px;
    line-height: 17px;
    text-align: center;
}
```
